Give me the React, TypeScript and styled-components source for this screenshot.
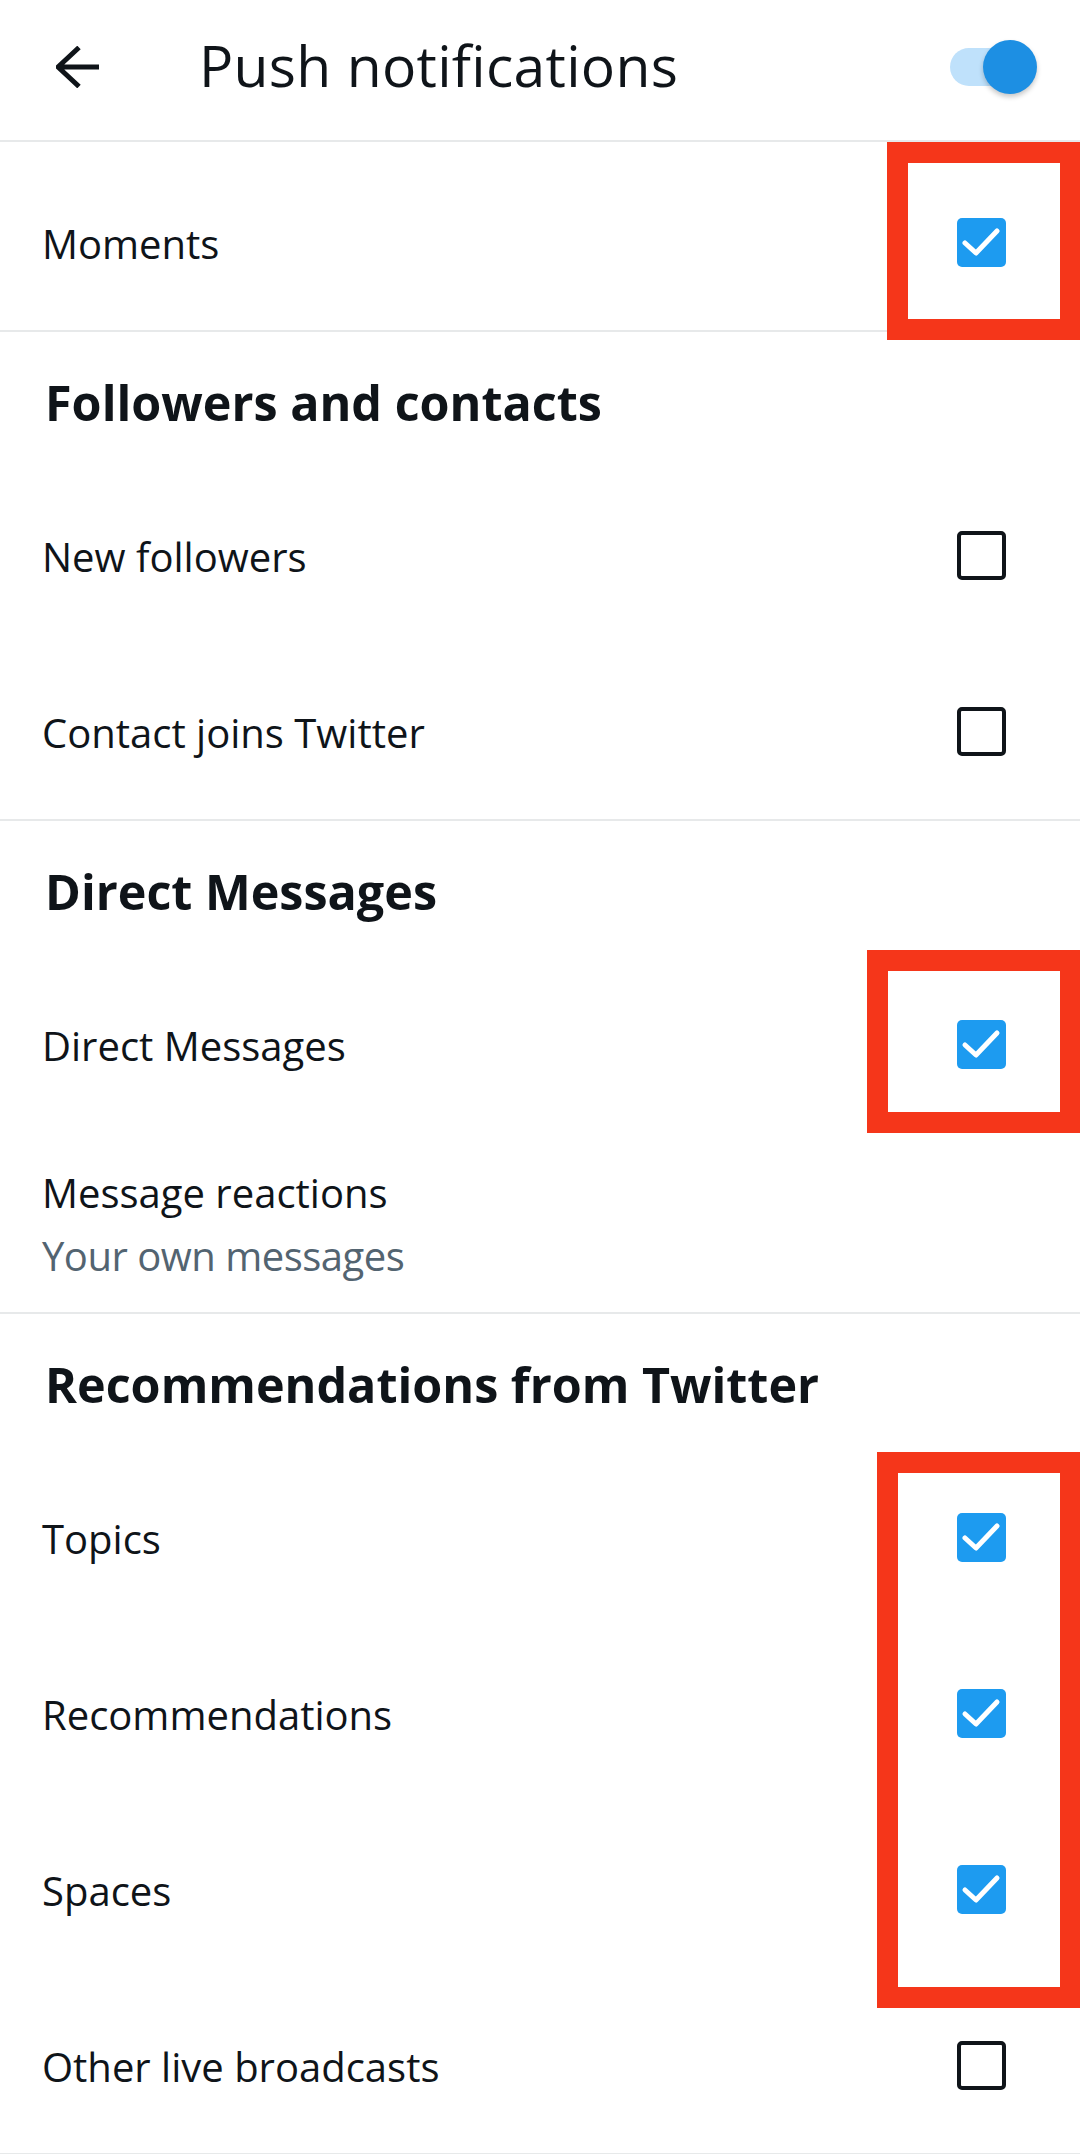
import React from 'react'
import styled, { createGlobalStyle } from 'styled-components'

const GlobalStyle = createGlobalStyle`
  html, body {
    margin: 0;
    padding: 0;
    background: #ffffff;
  }
  body {
    font-family: "Open Sans", "Liberation Sans", sans-serif;
    color: #0f1419;
  }
`

const Page = styled.div`
  position: relative;
  width: 1080px;
  height: 2154px;
  overflow: hidden;
  background: #ffffff;
`

const Header = styled.header`
  display: flex;
  align-items: center;
  height: 140px;
  padding: 0 43px 0 56px;
  border-bottom: 2px solid #e7e9ea;
`

const BackButton = styled.button`
  display: flex;
  align-items: center;
  justify-content: center;
  width: 44px;
  height: 44px;
  padding: 0;
  margin-top: -6px;
  border: none;
  background: none;
  color: #0f1419;
`

const Title = styled.h1`
  flex: 1;
  margin: -10px 0 0 99px;
  font-size: 57px;
  font-weight: 500;
  line-height: 1;
  letter-spacing: 0.3px;
  color: #0f1419;
`

const Track = styled.div`
  position: relative;
  width: 82px;
  height: 38px;
  margin-top: -6px;
  margin-right: 5px;
  border-radius: 19px;
  background: #bfe1fb;
`

const Thumb = styled.div`
  position: absolute;
  top: -8px;
  right: -5px;
  width: 54px;
  height: 54px;
  border-radius: 50%;
  background: #1d8fe3;
  box-shadow: 0 3px 5px rgba(0, 0, 0, 0.22);
`

const Section = styled.section<{ $padTop?: number }>`
  display: flex;
  flex-direction: column;
  padding-top: ${({ $padTop }) => $padTop ?? 0}px;
  border-bottom: 2px solid #e7e9ea;
`

const SectionTitle = styled.h2`
  margin: 0;
  height: 135px;
  padding: 38px 42px 0 45px;
  box-sizing: border-box;
  font-size: 48.5px;
  font-weight: 700;
  line-height: 64px;
  letter-spacing: 0;
  color: #0f1419;
`

const Row = styled.div<{ $tall?: boolean }>`
  display: flex;
  align-items: center;
  justify-content: space-between;
  height: ${({ $tall }) => ($tall ? 180 : 176)}px;
  padding: 0 74px 0 42px;
  box-sizing: border-box;
`

const Texts = styled.div`
  display: flex;
  flex-direction: column;
  gap: 7px;
`

const Label = styled.span`
  font-size: 40px;
  line-height: 56px;
  padding-top: 4px;
  color: #0f1419;
`

const SubLabel = styled.span`
  font-size: 40px;
  line-height: 56px;
  letter-spacing: -0.5px;
  color: #536471;
`

const Box = styled.span<{ $checked: boolean }>`
  display: flex;
  align-items: center;
  justify-content: center;
  flex: none;
  width: 49px;
  height: 49px;
  box-sizing: border-box;
  border-radius: 5px;
  background: ${({ $checked }) => ($checked ? '#1d9bf0' : 'transparent')};
  border: ${({ $checked }) => ($checked ? 'none' : '4px solid #0f1419')};
`

const Highlight = styled.div<{ $left: number; $top: number; $width: number; $height: number }>`
  position: absolute;
  left: ${({ $left }) => $left}px;
  top: ${({ $top }) => $top}px;
  width: ${({ $width }) => $width}px;
  height: ${({ $height }) => $height}px;
  box-sizing: border-box;
  border: 21px solid #f5361a;
  pointer-events: none;
`

function BackArrow() {
  return (
    <svg width="44" height="42" viewBox="0 0 44 42" fill="none">
      <path
        d="M23 1.5 L2 21 L23 40.5 M2 21 H43"
        stroke="#0f1419"
        strokeWidth="5"
        strokeLinejoin="miter"
      />
    </svg>
  )
}

function Checkbox({ checked }: { checked: boolean }) {
  return (
    <Box $checked={checked}>
      {checked && (
        <svg width="49" height="49" viewBox="0 0 49 49" fill="none">
          <path d="M8 25 L19 35 L40 13" stroke="#ffffff" strokeWidth="5" strokeLinecap="round" strokeLinejoin="round" />
        </svg>
      )}
    </Box>
  )
}

function SettingRow({ label, sub, checked }: { label: string; sub?: string; checked?: boolean }) {
  return (
    <Row $tall={!!sub}>
      {sub ? (
        <Texts>
          <Label>{label}</Label>
          <SubLabel>{sub}</SubLabel>
        </Texts>
      ) : (
        <Label>{label}</Label>
      )}
      {checked !== undefined && <Checkbox checked={checked} />}
    </Row>
  )
}

export default function App() {
  return (
    <Page>
      <GlobalStyle />
      <Header>
        <BackButton aria-label="Back">
          <BackArrow />
        </BackButton>
        <Title>Push notifications</Title>
        <Track>
          <Thumb />
        </Track>
      </Header>

      <Section $padTop={12}>
        <SettingRow label="Moments" checked />
      </Section>

      <Section>
        <SectionTitle>Followers and contacts</SectionTitle>
        <SettingRow label="New followers" checked={false} />
        <SettingRow label="Contact joins Twitter" checked={false} />
      </Section>

      <Section>
        <SectionTitle>Direct Messages</SectionTitle>
        <SettingRow label="Direct Messages" checked />
        <SettingRow label="Message reactions" sub="Your own messages" />
      </Section>

      <Section>
        <SectionTitle>Recommendations from Twitter</SectionTitle>
        <SettingRow label="Topics" checked />
        <SettingRow label="Recommendations" checked />
        <SettingRow label="Spaces" checked />
        <SettingRow label="Other live broadcasts" checked={false} />
      </Section>

      <Highlight $left={887} $top={142} $width={194} $height={198} />
      <Highlight $left={867} $top={950} $width={214} $height={183} />
      <Highlight $left={877} $top={1452} $width={204} $height={556} />
    </Page>
  )
}
